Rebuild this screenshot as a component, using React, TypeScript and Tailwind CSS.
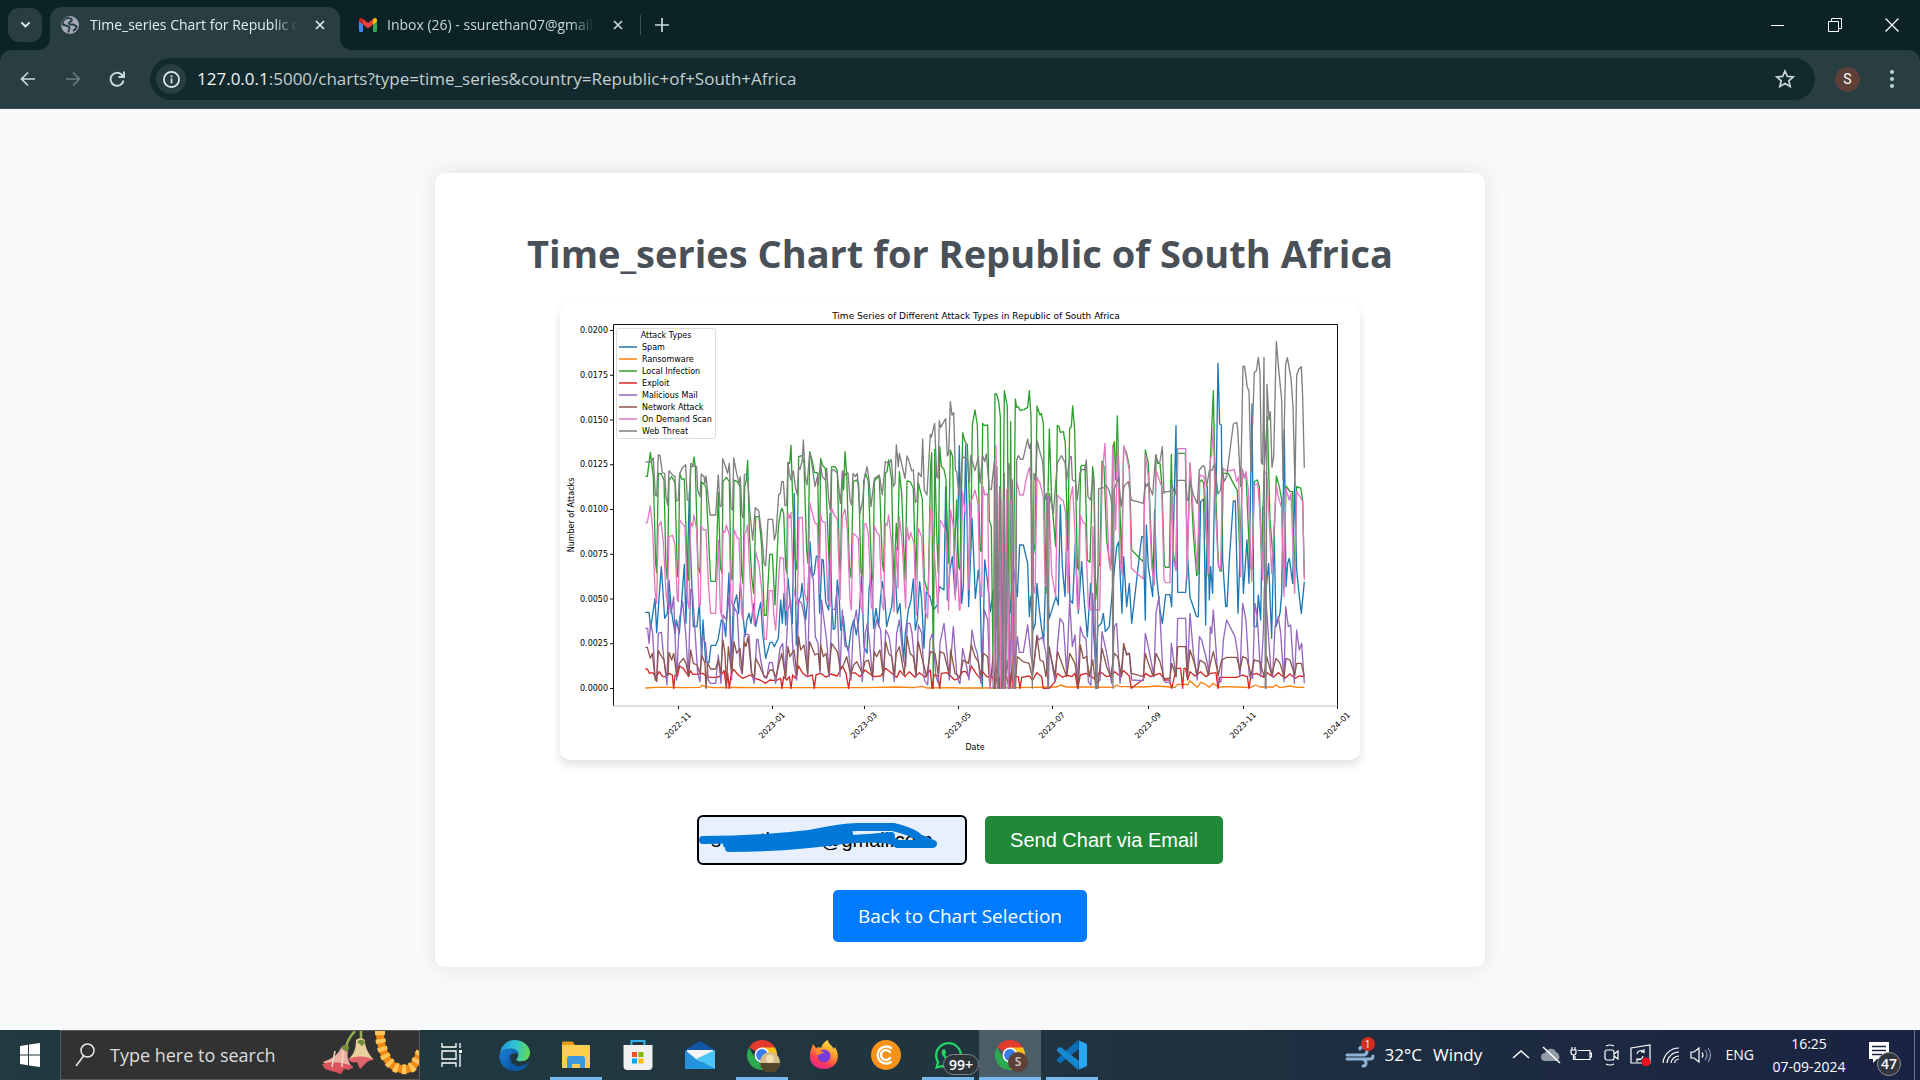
import React from "react";
import { FaWhatsapp } from "react-icons/fa";

const ui = "font-['Open_Sans','Noto_Sans',sans-serif]";

type Series = { name: string; color: string; left: string; right: string };

const series: Series[] = [
  {
    name: "Spam",
    color: "#1f77b4",
    left: "256,937 267,937 272,985 285,895 290,998 296,910 304,800 314,955 322,940 327,840 334,930 345,1000 349,960 358,1000 373,793 378,970 388,575 392,760 400,980 411,980 418,910 425,1080 429,960 437,1085 447,1088 453,1036 467,1036 474,1020 484,960 492,970 497,1010 507,818 513,1090 520,920 530,885 536,940 541,848 548,930 555,1010 561,960 567,940 573,970 581,910 587,980 595,940 602,907 608,1000 617,1075 630,1027 637,1027 643,1040 655,1015 662,900 667,970 672,880 677,975 684,835 690,900 697,970 703,580 709,1035 716,900 722,890 726,850 737,960 743,900 750,725 757,830 763,820 769,768 774,770 779,940 786,778 790,780 797,905 806,930 810,640 815,900 820,988 825,985 832,840 838,900 842,990 850,950 858,1030 865,1055 873,990 881,960 889,1005 896,960 905,830 912,1040 921,1060 927,870 934,820 941,985 948,925 956,980 961,900 967,845 974,890 980,980 986,955 995,920 1005,800 1012,940 1020,910 1031,1080 1036,1000 1045,930 1053,900 1060,837 1066,990 1072,960 1079,845 1085,900 1092,1045 1099,875 1110,890 1120,930 1132,915 1138,860 1152,870 1157,560 1162,900 1170,810 1177,770 1185,885 1190,845 1198,437",
    right: "5,910 10,860 17,435 26,920 36,655 42,790 46,895 55,810 60,860 67,1165 74,780 82,840 91,935 100,870 110,980 120,870 130,970 140,860 150,940 160,800 172,890 179,735 190,735 203,790 208,950 212,890 220,990 226,970 231,850 237,920 244,980 251,1025 258,800 268,955 288,890 295,915 301,615 307,800 315,890 322,640 330,900 338,910 346,730 355,940 365,785 372,895 382,1010 392,850 400,980 407,1100 414,980 424,970 430,940 436,995 448,980 458,860 470,740 476,725 486,940 491,770 500,920 508,850 515,970 545,710 550,710 556,960 559,675 565,800 578,890 584,630 590,830 600,930 607,970 617,884 630,884 635,920 648,377 653,877 677,877 683,770 690,892 710,950 715,950 722,605 731,597 737,975 742,560 748,900 752,800 758,880 764,550 768,590 774,190 779,372 784,375 788,780 797,920 801,920 808,780 820,603 826,603 834,940 845,620 850,880 861,720 867,850 876,312 882,980 890,980 895,885 902,960 908,620 915,900 926,790 935,1015 942,680 948,980 960,940 965,880 973,390 978,860 983,790 988,775 998,850 1004,545 1010,810 1017,880 1024,940 1033,845",
  },
  {
    name: "Ransomware",
    color: "#ff7f0e",
    left: "256,1164 290,1162 330,1162 370,1163 420,1162 427,1156 436,1160 460,1163 520,1162 600,1163 700,1163 800,1163 900,1163 960,1162 1010,1161 1060,1163 1087,1159 1100,1164 1180,1163",
    right: "0,1164 60,1164 160,1163 290,1161 301,1155 320,1161 400,1161 460,1162 470,1155 480,1160 505,1160 550,1161 590,1158 630,1161 645,1162 653,1153 677,1153 683,1155 690,1142 712,1162 722,1147 735,1152 748,1162 760,1150 775,1162 790,1160 830,1161 870,1163 887,1155 900,1161 940,1161 947,1155 960,1163 990,1158 1010,1162 1033,1162",
  },
  {
    name: "Local Infection",
    color: "#2ca02c",
    left: "256,529 262,529 271,457 280,530 287,790 290,818 295,520 304,522 312,540 318,800 322,838 327,540 335,530 345,548 352,830 355,830 359,520 365,537 373,537 382,820 386,840 392,500 398,500 402,471 406,500 414,800 420,820 425,545 438,560 445,700 452,844 467,844 475,577 481,800 486,820 489,545 499,532 508,545 513,830 517,840 522,540 532,545 540,560 545,820 549,850 554,560 559,540 563,481 568,700 575,830 581,880 587,650 597,650 605,740 613,946 619,946 629,763 637,763 645,915 655,680 662,635 666,625 671,640 677,800 680,820 684,488 689,490 693,436 698,600 706,780 711,810 716,470 726,467 732,490 740,750 744,790 749,455 756,480 763,517 773,519 778,810 782,475 787,495 796,505 806,760 811,820 815,500 825,500 832,512 838,780 841,818 847,515 851,570 855,455 860,520 868,800 873,833 880,545 889,540 896,550 903,815 907,830 911,545 917,520 925,545 935,820 939,840 943,545 950,535 958,530 967,790 971,815 976,520 981,515 986,480 995,540 1001,860 1009,670 1013,750 1018,515 1025,580 1035,840 1041,543 1051,545 1060,565 1067,840 1075,548 1087,598 1093,840 1102,872 1105,860 1112,500 1115,458 1120,1165 1124,448 1130,700 1135,820 1139,440 1144,498 1152,508 1158,540 1165,790 1171,450 1178,470 1183,780 1190,600 1196,800",
    right: "0,810 8,398 15,425 22,435 28,600 32,750 37,375 45,330 52,375 60,750 64,755 68,370 74,377 83,375 88,660 94,680 100,1165 105,282 110,282 116,305 121,350 125,1165 133,272 142,320 148,1165 152,365 157,1165 166,297 170,322 175,320 180,331 192,329 203,322 208,272 213,350 218,780 225,730 231,318 240,345 244,340 250,370 258,880 268,387 275,600 287,740 292,376 297,380 301,397 310,395 316,430 323,750 329,385 334,380 338,318 344,390 352,800 356,810 362,500 366,496 375,496 382,780 390,787 398,500 402,540 407,900 416,796 419,796 426,483 432,500 440,720 450,800 455,790 459,440 463,425 467,540 472,348 479,600 485,790 491,440 500,460 508,500 515,750 550,785 556,450 565,490 575,760 583,850 588,465 593,490 600,490 606,560 613,795 617,802 628,802 634,463 640,760 648,810 653,460 676,460 682,780 690,490 700,700 710,827 714,820 719,545 725,540 731,550 745,830 751,480 760,272 765,520 775,790 780,813 784,813 790,520 805,520 820,550 832,572 840,780 847,510 853,530 858,520 870,800 876,810 883,545 892,540 898,560 905,800 912,520 922,350 930,660 940,780 949,528 958,560 965,600 971,870 978,558 990,575 998,575 1003,855 1010,560 1022,564 1028,600 1033,830",
  },
  {
    name: "Exploit",
    color: "#d62728",
    left: "256,1107 262,1107 268,1120 278,1118 288,1132 298,1115 308,1130 318,1130 328,1120 337,1125 341,1165 345,1125 352,1130 359,1098 370,1105 378,1118 386,1128 391,1112 398,1123 415,1122 428,1120 440,1130 452,1132 470,1132 482,1128 492,1112 499,1160 503,1120 508,1165 514,1120 521,1108 535,1125 547,1135 560,1130 570,1125 585,1135 600,1140 617,1150 630,1140 647,1142 662,1135 666,1165 671,1130 680,1140 688,1130 693,1165 698,1125 706,1135 716,1098 728,1120 742,1130 757,1125 763,1165 768,1125 782,1120 798,1132 812,1122 832,1128 847,1098 858,1120 866,1165 872,1120 885,1118 900,1130 915,1110 930,1122 943,1130 962,1128 977,1105 995,1120 1010,1132 1020,1112 1035,1130 1048,1115 1065,1132 1078,1118 1095,1132 1111,1110 1116,1165 1122,1125 1134,1128 1139,1165 1144,1120 1160,1118 1172,1128 1184,1140 1196,1135",
    right: "8,1115 18,1115 26,1130 34,1098 48,1120 60,1135 68,1115 80,1130 98,1130 104,1165 112,1130 122,1165 130,1125 140,1130 147,1165 154,1120 160,1165 167,1130 175,1130 180,1165 185,1132 208,1128 218,1140 231,1118 245,1130 250,1165 268,1165 285,1145 292,1120 308,1132 320,1125 335,1130 345,1120 353,1165 361,1125 378,1120 395,1130 407,1140 415,1120 425,1118 440,1130 456,1126 464,1115 480,1128 491,1112 508,1128 514,1165 550,1138 556,1120 572,1130 585,1125 600,1120 615,1140 628,1140 635,1165 642,1135 650,1105 662,1105 668,1165 672,1105 677,1105 683,1140 690,1115 705,1128 722,1115 738,1130 752,1120 768,1118 774,1165 779,1132 830,1132 846,1125 862,1130 867,1165 873,1125 890,1120 912,1132 922,1118 940,1132 955,1118 975,1135 990,1122 1005,1135 1018,1128 1033,1130",
  },
  {
    name: "Malicious Mail",
    color: "#9467bd",
    left: "256,985 263,985 267,1030 272,970 278,1000 285,1130 290,1145 295,1000 304,997 312,1080 321,1155 327,880 333,940 337,920 341,890 350,1140 358,960 368,905 377,1000 385,1130 392,868 397,868 403,960 413,1120 420,1145 427,1010 437,1030 445,1140 452,1150 467,1150 475,1065 483,1150 489,945 500,960 508,880 515,1140 522,920 532,940 540,1100 546,1120 553,1000 567,1005 575,1120 583,1150 590,1018 594,1018 602,1080 612,1130 620,1135 628,1088 637,1088 647,1150 660,1045 668,1030 675,1130 684,930 692,900 700,1080 710,1140 716,900 725,910 735,960 743,1130 750,800 760,840 766,1010 774,1030 780,1120 785,900 790,945 800,1020 808,1130 816,928 825,928 830,880 840,1130 847,930 855,1040 865,1040 873,1140 880,980 889,930 897,1010 907,1145 916,1000 922,970 930,1040 938,1140 944,990 950,960 962,990 970,1145 977,990 987,1010 993,1050 1003,1145 1010,1000 1018,960 1030,1080 1037,1100 1042,970 1050,970 1056,1000 1068,1130 1075,975 1085,1000 1093,1140 1103,1155 1110,1020 1118,1000 1128,1130 1135,1150 1140,1030 1152,970 1160,1050 1168,1140 1180,980 1190,1120 1198,1150",
    right: "0,1150 8,1045 20,1100 27,1140 36,990 45,1040 52,1060 63,1150 73,930 83,960 90,1140 100,1100 108,700 116,1165 124,760 132,1165 140,680 148,1165 156,900 164,1100 172,1010 178,1057 190,1057 203,975 212,1060 220,1110 231,1005 237,1020 248,1010 258,1060 265,1165 268,1040 285,1145 293,1030 300,955 310,970 320,1120 329,900 337,1040 345,1005 353,1150 361,980 370,1010 378,1015 385,1145 393,1155 398,880 410,1150 420,1140 426,995 440,1060 455,1150 463,980 470,970 480,1150 491,1040 500,1060 508,1060 515,1140 550,1142 556,1000 565,1040 582,1130 588,940 597,890 610,1140 617,1147 630,1147 634,1030 648,1130 653,955 677,955 682,1130 690,940 700,1060 712,1140 718,1010 725,1020 740,1080 747,1120 751,980 755,1000 760,930 775,1150 783,1145 790,1020 800,960 825,1010 833,1060 840,1130 848,910 858,960 868,1130 878,1135 885,910 892,950 902,1130 910,1000 913,860 920,930 932,1100 938,1130 945,980 955,950 962,1000 972,1145 977,920 985,980 992,975 1003,1150 1010,990 1018,1050 1025,1030 1033,1150",
  },
  {
    name: "Network Attack",
    color: "#8c564b",
    left: "256,1042 262,1042 271,1075 277,1060 286,1140 290,1143 295,1052 305,1070 312,1080 318,1120 324,1125 327,1057 335,1080 341,1060 350,1125 358,1090 370,1075 378,1090 386,1130 392,1050 400,1090 411,1095 420,1120 425,1065 435,1090 438,1165 443,1090 452,1107 467,1107 475,1080 482,1120 489,1020 495,1060 499,1165 505,1040 515,1120 522,1025 530,1060 540,1045 547,1120 553,1025 558,1040 564,1010 575,1120 583,1130 587,1075 600,1100 613,1130 620,1130 630,1110 637,1110 648,1130 660,1080 665,1060 677,1135 684,1040 690,1070 702,1050 711,1125 716,1010 722,1050 732,1035 743,1120 749,1025 765,1065 775,1060 780,1110 782,1035 790,1070 798,1060 806,1120 815,1030 832,1055 842,1110 850,1095 860,1070 872,1125 881,1095 890,1085 907,1120 915,1085 925,1080 937,1130 943,1055 950,1070 960,1050 970,1130 977,1025 986,1060 995,1070 1003,1125 1009,1060 1018,1040 1033,1125 1041,1010 1050,1060 1060,1070 1068,1125 1075,1025 1085,1070 1100,1130 1111,1055 1125,1060 1135,1125 1140,1055 1152,1060 1168,1125 1172,1050 1185,1120 1197,1130",
    right: "0,1130 10,1080 25,1090 34,1035 45,1070 55,1085 63,1130 70,1060 83,1070 90,1165 100,1060 105,1165 112,1080 118,1165 126,1060 134,1165 142,1080 150,1165 158,1080 165,1165 172,1070 190,1085 207,1090 217,1130 231,1010 240,1080 250,1085 258,1130 266,1040 285,1125 293,1055 302,1080 320,1130 329,1060 345,1090 355,1165 361,1035 370,1075 380,1070 388,1130 398,1080 408,1165 413,1165 426,1045 440,1100 452,1130 463,1060 473,1070 485,1130 491,1030 500,1065 508,1060 514,1120 550,1130 556,1060 565,1090 580,1130 588,1060 600,1085 612,1135 630,1135 635,1090 648,1130 653,1040 677,1040 682,1130 690,1050 700,1080 712,1125 720,1080 735,1090 745,1125 751,1090 760,1055 775,1125 785,1080 800,1072 830,1072 840,1110 848,1070 860,1075 873,1125 883,1080 900,1085 912,1130 920,1070 935,1125 948,1075 960,1090 972,1130 978,1075 990,1080 1004,1125 1010,1090 1024,1090 1033,1130",
  },
  {
    name: "On Demand Scan",
    color: "#e377c2",
    left: "256,668 262,668 271,617 278,690 285,870 290,910 295,680 303,665 310,725 318,880 322,910 327,710 338,706 345,735 352,900 355,905 359,660 365,668 375,680 382,900 387,925 392,665 398,680 402,645 410,690 417,920 421,915 424,678 430,690 438,690 445,850 452,940 467,940 475,720 481,930 485,950 489,692 494,698 499,675 508,705 513,900 518,920 522,688 532,715 537,715 545,940 549,960 554,700 558,697 563,675 570,830 576,910 583,975 587,755 597,795 605,870 613,1018 619,1018 628,872 637,872 642,950 647,990 655,850 660,772 670,775 677,930 681,930 684,640 689,655 693,637 700,860 707,900 712,915 717,653 727,652 734,880 741,905 745,900 749,607 756,635 765,670 772,672 778,880 781,640 787,665 796,667 803,900 810,920 815,625 823,645 832,657 840,900 847,650 855,627 862,690 870,900 874,930 879,700 888,707 895,715 903,920 908,940 912,672 918,672 925,700 934,920 938,930 943,677 952,700 958,705 966,910 971,930 976,670 981,677 986,645 995,730 1002,935 1009,740 1014,865 1018,650 1026,720 1037,925 1041,680 1047,720 1052,697 1062,730 1069,945 1075,685 1085,710 1095,930 1103,955 1111,630 1116,628 1122,740 1134,940 1140,660 1152,680 1158,700 1166,930 1172,630 1180,680 1186,900 1190,760 1198,930",
    right: "0,930 8,575 15,640 22,645 27,870 32,610 45,570 54,610 60,880 65,890 69,560 75,585 83,580 90,1165 100,1160 108,437 113,1165 118,580 122,1165 130,600 135,1165 140,570 145,1165 150,600 155,610 160,1165 170,545 180,585 190,585 200,530 208,503 213,540 218,850 225,880 231,532 240,550 250,590 255,850 260,860 266,590 275,820 287,890 292,585 300,595 310,603 317,640 324,880 330,600 338,560 345,700 352,920 356,930 361,645 370,668 376,670 385,925 393,930 399,680 405,930 419,930 427,520 435,430 440,600 447,780 452,810 458,437 467,690 473,420 480,780 486,825 491,437 500,470 508,510 514,805 550,837 556,465 565,530 575,800 583,855 588,510 598,540 605,560 612,840 617,848 630,848 635,550 640,780 648,810 653,446 677,446 681,840 690,488 700,640 712,810 719,525 733,530 745,820 751,480 755,465 760,380 765,600 775,800 782,810 788,507 805,513 823,508 830,545 836,530 842,830 847,507 852,535 858,515 865,570 875,845 883,555 893,550 900,640 908,840 914,515 920,520 928,670 935,820 949,555 955,590 965,625 972,890 977,565 988,600 993,580 1004,880 1010,575 1020,590 1028,605 1033,840",
  },
  {
    name: "Web Threat",
    color: "#7f7f7f",
    left: "256,485 271,487 280,474 286,586 290,588 295,465 300,466 307,518 314,520 318,590 323,615 327,512 338,525 345,530 349,603 355,600 359,520 368,503 377,494 382,600 388,600 392,491 398,493 402,498 410,500 413,570 420,590 424,522 432,530 435,550 438,528 443,575 450,645 467,645 475,525 480,620 485,617 488,476 495,495 503,520 508,490 513,625 518,630 521,474 530,520 537,550 541,530 546,645 550,655 553,525 562,520 570,640 578,720 586,623 596,632 605,700 612,790 617,798 624,658 638,658 643,720 648,700 656,585 661,580 665,545 670,545 675,617 680,615 684,488 688,520 693,540 700,512 706,560 712,585 716,500 720,508 727,480 730,420 736,530 741,555 749,460 754,480 765,560 772,530 775,555 781,490 787,530 796,540 800,505 806,600 811,630 814,508 825,512 832,520 841,610 848,512 852,530 858,520 864,518 870,600 875,615 879,520 886,530 892,520 900,640 908,600 914,530 921,500 927,538 933,620 943,535 958,525 967,584 976,485 988,490 994,478 1000,560 1005,550 1009,435 1015,500 1018,460 1035,535 1041,468 1046,480 1055,512 1060,510 1066,608 1071,600 1075,518 1084,530 1088,417 1093,570 1101,585 1111,403 1114,412 1124,370 1130,530 1134,535 1138,362 1142,382 1157,356 1162,468 1166,460 1171,305 1176,345 1181,338 1186,510 1190,515 1197,585",
    right: "0,560 8,470 22,478 28,548 32,466 45,512 55,470 60,550 68,467 74,485 79,462 88,568 94,568 103,485 107,1165 111,500 114,1165 119,560 122,600 128,1165 133,520 137,1165 145,490 149,500 152,600 157,540 163,1165 167,1165 170,480 175,467 182,478 189,478 203,417 208,445 212,430 217,1165 222,520 227,540 232,423 238,450 248,485 255,600 260,580 264,1165 268,580 280,640 292,488 305,467 315,488 320,540 330,470 334,470 337,540 347,545 352,600 360,518 366,508 375,510 379,480 384,590 392,600 398,530 403,560 407,1165 411,1165 416,566 432,563 438,556 446,568 452,590 456,620 459,1165 462,570 470,548 476,530 483,620 492,560 500,550 505,545 514,600 550,610 556,550 560,560 564,550 578,585 587,465 593,488 600,485 607,440 612,580 616,575 630,575 635,550 645,585 653,541 676,541 682,600 686,602 690,545 700,585 712,611 718,510 728,498 734,500 740,560 748,512 757,510 764,490 774,582 782,570 787,500 792,545 800,530 820,372 830,367 833,385 842,560 849,198 854,200 862,262 867,272 873,515 883,217 889,213 895,172 900,217 904,487 908,493 912,172 916,1165 918,1165 921,253 927,360 931,335 936,502 941,470 949,125 957,218 965,300 969,540 977,193 982,173 993,235 999,320 1005,560 1010,226 1016,208 1024,200 1028,290 1033,503",
  },
];

function linePoints(s: Series) {
  const shifted = s.right
    .split(" ")
    .map((p) => {
      const [x, y] = p.split(",").map(Number);
      return `${x + 1200},${y}`;
    })
    .join(" ");
  return `${s.left} ${shifted}`;
}

const yTicks = ["0.0200", "0.0175", "0.0150", "0.0125", "0.0100", "0.0075", "0.0050", "0.0025", "0.0000"];
const xTicks: [number, string][] = [
  [119, "2022-11"],
  [213, "2023-01"],
  [305, "2023-03"],
  [399, "2023-05"],
  [493, "2023-07"],
  [589, "2023-09"],
  [684, "2023-11"],
  [778, "2024-01"],
];

function TimeSeriesChart() {
  return (
    <svg viewBox="0 0 800 457" role="img" aria-label="Time series of attack types" className="mx-auto block w-full max-w-[800px] rounded-[10px] bg-white font-['DejaVu_Sans',sans-serif] text-[8px] shadow-[0_5px_10px_rgba(0,0,0,0.12)]">
      <text x="416" y="16" textAnchor="middle" fontSize="9">Time Series of Different Attack Types in Republic of South Africa</text>
      <g transform="translate(0 -3) scale(0.33333)" fill="none" strokeWidth="4" strokeLinejoin="round">
        {series.map((s) => (
          <polyline key={s.name} points={linePoints(s)} stroke={s.color} />
        ))}
      </g>
      <path d="M53.500 403V21.500H777.500V405" fill="none" stroke="#111" />
      <path d="M53 403H778" stroke="#bbb" />
      {yTicks.map((t, i) => (
        <g key={t}>
          <path d={`M50 ${27.5 + i * 44.75}h3`} stroke="#111" />
          <text x="48" y={30 + i * 44.75} textAnchor="end">{t}</text>
        </g>
      ))}
      {xTicks.map(([x, t]) => (
        <g key={t}>
          <path d={`M${x - 0.5} 403v3`} stroke="#111" />
          <text transform={`translate(${x - 11} 436) rotate(-45)`}>{t}</text>
        </g>
      ))}
      <text x="415" y="447" textAnchor="middle">Date</text>
      <text transform="translate(14 212) rotate(-90)" textAnchor="middle">Number of Attacks</text>
      <rect x="56.500" y="25.500" width="99" height="110" rx="2" fill="#fff" stroke="#ddd" />
      <text x="106" y="35" textAnchor="middle">Attack Types</text>
      {series.map((s, i) => (
        <g key={s.name}>
          <path d={`M59 ${44 + i * 12}h18`} stroke={s.color} strokeWidth="1.3" />
          <text x="82" y={47 + i * 12}>{s.name}</text>
        </g>
      ))}
    </svg>
  );
}

function CloseIcon() {
  return (
    <svg viewBox="0 0 10 10" className="size-[10px]" fill="none" stroke="currentColor" strokeWidth="1.7">
      <path d="M1 1l8 8M9 1L1 9" />
    </svg>
  );
}

function BrowserChrome() {
  return (
    <header className={`bg-[#0b2327] text-[#c9d8d9] ${ui}`}>
      <div className="flex h-[50px] items-stretch">
        <button aria-label="Search tabs" className="my-2 ml-2 grid w-[34px] place-items-center rounded-[11px] bg-[#283e43]">
          <svg viewBox="0 0 12 8" className="w-[11px]" fill="none" stroke="#e8f0f0" strokeWidth="2"><path d="M1.500 1.500L6 6l4.500-4.500" /></svg>
        </button>
        <div className="relative ml-2 mt-[7px] flex w-[290px] items-center rounded-t-xl bg-[#283e43] pb-[7px] pl-[11px] pr-[15px] text-sm text-[#e3eeee]">
          <svg viewBox="0 0 12 12" className="absolute -left-3 bottom-0 size-3"><path d="M12 0v12H0C7 12 12 7 12 0" fill="#283e43" /></svg>
          <svg viewBox="0 0 12 12" className="absolute -right-3 bottom-0 size-3"><path d="M0 0v12h12C5 12 0 7 0 0" fill="#283e43" /></svg>
          <svg viewBox="0 0 18 18" className="size-[18px] shrink-0">
            <circle cx="9" cy="9" r="9" fill="#a3a8b4" />
            <path d="M8 1.500C4 2 1.500 5 1.500 8.500l4 1.200c2 .3 3 1 3 2.300 0 1-1 1.500-1 4.500M8 1.500c.5 1.500 2.500 1 3 2.500.3 1.200-2.500 1.500-3 3-.4 1.500 2 1.500 3.500 1.500 2 0 2.500 1.500 4.500 1.500M12 15c2-1 3.500-3 4-5" fill="none" stroke="#283e43" strokeWidth="1.900" />
          </svg>
          <span className="ml-[11px] w-[208px] shrink-0 overflow-hidden whitespace-nowrap [mask-image:linear-gradient(to_right,black_88%,transparent)]">Time_series Chart for Republic of South Africa</span>
          <button aria-label="Close tab" className="ml-auto"><CloseIcon /></button>
        </div>
        <div className="flex w-[300px] items-center pl-[19px] text-sm">
          <svg viewBox="0 0 18 14" className="w-[18px] shrink-0">
            <path d="M0 2v10.500c0 .8.600 1.500 1.500 1.500H4V4z" fill="#4285f4" />
            <path d="M18 2v10.500c0 .8-.6 1.500-1.500 1.500H14V4z" fill="#34a853" />
            <path d="M14 1l-5 4L4 1v5.500l5 4 5-4z" fill="#ea4335" />
            <path d="M4 6.500L0 3.500V2c0-1.700 2-2.500 3.300-1.500L4 1z" fill="#c5221f" />
            <path d="M14 6.500l4-3V2c0-1.700-2-2.500-3.300-1.500L14 1z" fill="#fbbc04" />
          </svg>
          <span className="ml-[10px] w-[208px] shrink-0 overflow-hidden whitespace-nowrap [mask-image:linear-gradient(to_right,black_88%,transparent)]">Inbox (26) - ssurethan07@gmail.com</span>
          <button aria-label="Close tab" className="ml-auto mr-[17px]"><CloseIcon /></button>
        </div>
        <div className="my-auto h-5 w-px bg-[#3a5157]" />
        <button aria-label="New tab" className="ml-[14px]">
          <svg viewBox="0 0 14 14" className="size-[14px]" stroke="#c9dcde" strokeWidth="1.700"><path d="M7 0v14M0 7h14" /></svg>
        </button>
        <div className="ml-auto flex">
          <button aria-label="Minimize" className="w-[57px]"><svg viewBox="0 0 14 14" className="mx-auto size-[14px]" stroke="#fff"><path d="M0 7.500h13" /></svg></button>
          <button aria-label="Restore" className="w-[57px]"><svg viewBox="0 0 14 14" className="mx-auto size-[14px]" fill="none" stroke="#fff"><path d="M.5 3.500h10v10h-10zM3.500 3V.5h10v10H11" /></svg></button>
          <button aria-label="Close window" className="w-[57px]"><svg viewBox="0 0 14 14" className="mx-auto size-[14px]" stroke="#fff" strokeWidth="1.300"><path d="M.5.5l13 13M13.500.5l-13 13" /></svg></button>
        </div>
      </div>
      <div className="flex h-[59px] items-center rounded-t-xl border-b border-[#3a4f54] bg-[#283e43]">
        <button aria-label="Back" className="ml-5"><svg viewBox="0 0 16 16" className="size-4" fill="none" stroke="#c8dcde" strokeWidth="1.700"><path d="M15 8H1.500M8 1.500L1.500 8 8 14.500" /></svg></button>
        <button aria-label="Forward" className="ml-[29px]"><svg viewBox="0 0 16 16" className="size-4" fill="none" stroke="#6b7e82" strokeWidth="1.700"><path d="M1 8h13.500M8 1.500L14.500 8 8 14.500" /></svg></button>
        <button aria-label="Reload" className="ml-[28px]"><svg viewBox="0 0 16 16" className="size-4" fill="none" stroke="#c8dcde" strokeWidth="1.900"><path d="M14.500 9.500A6.500 6.500 0 1 1 12.500 3.500L14.500 5.500M15 0.500V6H9.500" /></svg></button>
        <div className="ml-[25px] flex h-[42px] flex-1 items-center rounded-full bg-[#12292d] pl-[6px] pr-5">
          <span className="grid size-[30px] place-items-center rounded-full bg-[#283e43]">
            <svg viewBox="0 0 18 18" className="size-[17px]" fill="none" stroke="#e3eeee" strokeWidth="1.800"><circle cx="9" cy="9" r="8" /><path d="M9 8v5M9 4.800v1.800" /></svg>
          </span>
          <p className="ml-[11px] text-[17px] text-[#c3cfd1]"><span className="text-[#eef5f5]">127.0.0.1</span>:5000/charts?type=time_series&amp;country=Republic+of+South+Africa</p>
          <button aria-label="Bookmark this page" className="ml-auto"><svg viewBox="0 0 20 20" className="size-5" fill="none" stroke="#c8d4d6" strokeWidth="1.700"><path d="M10 2l2.400 5.400 5.900.5-4.500 3.900 1.400 5.800L10 14.500l-5.200 3.100 1.400-5.800L1.700 7.900l5.900-.5z" /></svg></button>
        </div>
        <button aria-label="Profile" className="ml-5 grid size-[25px] place-items-center rounded-full bg-[#5d4038] font-['Roboto',sans-serif] text-sm text-white">S</button>
        <button aria-label="Menu" className="ml-[30px] mr-[26px]"><svg viewBox="0 0 4 18" className="h-[18px] w-1" fill="#bcd4d8"><circle cx="2" cy="2" r="2" /><circle cx="2" cy="9" r="2" /><circle cx="2" cy="16" r="2" /></svg></button>
      </div>
    </header>
  );
}

function ChromeLogo() {
  return (
    <svg viewBox="0 0 32 32" className="size-[30px]">
      <path d="M16 16L2.140 8A16 16 0 0 1 29.860 8z" fill="#e33b2e" />
      <path d="M16 32A16 16 0 0 1 2.140 8L9 20l7 4 7-4z" fill="#2da94f" />
      <path d="M16 8h13.860A16 16 0 0 1 16 32l7-12z" fill="#fbc116" />
      <circle cx="16" cy="16" r="8" fill="#fff" />
      <circle cx="16" cy="16" r="6.300" fill="#3b7ded" />
    </svg>
  );
}

function TaskButton({ label, open, active, children }: { label: string; open?: boolean; active?: boolean; children: React.ReactNode }) {
  return (
    <button aria-label={label} className={active ? "relative grid w-[62px] place-items-center bg-[#4b5d67]" : "relative grid w-[62px] place-items-center"}>
      {children}
      {(open || active) && <span className={active ? "absolute inset-x-0 bottom-0 h-[3px] bg-[#76b9ed]" : "absolute inset-x-[5px] bottom-0 h-[3px] bg-[#76b9ed]"} />}
    </button>
  );
}

function SearchArt() {
  return (
    <svg viewBox="0 0 100 48" className="ml-auto h-12 w-[100px] shrink-0">
      <path d="M36 0Q28 8 26 20M42 0v12" fill="none" stroke="#8fae52" strokeWidth="2.500" />
      <path d="M22 17c4-5 9-3 7 2-1 6-1 11 5 18-6 1-11 1-16 0-6-1-10-3-14-6 8-3 14-6 18-14" fill="#ecb0a2" />
      <path d="M3 33c9-3 20-2 31 2l-4 4-5-1-3 5-6-2-4-1-6-2z" fill="#d9545c" />
      <path d="M16 20l-3 16M24 20l-1 16" stroke="#f6d6c2" strokeWidth="1.500" />
      <path d="M37 9c3-3 9-2 9 1 0 6 3 12 8 18-3 1-9 3-13 3-4 0-8-1-11-3 5-5 7-11 7-19" fill="#e8cf9b" />
      <path d="M29 28c7-3 18-4 26 1-4 0-6 1-8 3l-6 6-3-7c-4 1-7 0-9-3" fill="#e2646b" />
      <path d="M22 17c2-4 8-4 8 0l-2 4zM38 11c2-3 8-3 8 1l-3 3z" fill="#728b35" />
      <path d="M61 0C61 18 68 36 82 38S97 30 102 21" fill="none" stroke="#f08a12" strokeWidth="8" />
      <path d="M61 0C61 18 68 36 82 38S97 30 102 21" fill="none" stroke="#ffc55a" strokeWidth="10" strokeDasharray="4 4" />
    </svg>
  );
}

function Taskbar() {
  return (
    <footer className={`flex h-[50px] items-stretch bg-linear-to-r from-[#213940] via-[#21353f] to-[#1a2342] text-white ${ui}`}>
      <button aria-label="Start" className="grid w-[60px] shrink-0 place-items-center">
        <svg viewBox="0 0 20 24" className="h-6 w-5" fill="#fff"><path d="M0 3l8-1.200V11.500H0zM9 1.600L20 0v11.500H9zM0 12.500h8v9.700L0 21zM9 12.500h11V24L9 22.400z" /></svg>
      </button>
      <label className="flex w-[360px] shrink-0 items-center overflow-hidden border border-[#5a5a5a] bg-[#323232] pl-[14px]">
        <svg viewBox="0 0 20 24" className="h-6 w-5 shrink-0" fill="none" stroke="#e8e8e8" strokeWidth="1.500"><circle cx="12.500" cy="7.500" r="6.500" /><path d="M8.500 13L1 23" /></svg>
        <input aria-label="Search" placeholder="Type here to search" className="ml-[15px] w-[190px] bg-transparent text-[18px] outline-none placeholder:text-[#dcdcdc]" />
        <SearchArt />
      </label>
      <nav className="ml-px flex">
        <TaskButton label="Task view">
          <svg viewBox="0 0 22 24" className="h-6 w-[22px]" fill="none" stroke="#fff" strokeWidth="1.300"><path d="M1 0v4h14V0M1 24v-4h14v4M1 8h14v8H1zM19 0v5M19 11v13" /><path d="M18 7h3v3h-3z" fill="#fff" stroke="none" /></svg>
        </TaskButton>
        <TaskButton label="Edge">
          <svg viewBox="0 0 32 32" className="size-[31px]">
            <defs>
              <linearGradient id="edgeTop" x1="0" x2="1" y1=".4" y2=".5"><stop stopColor="#1e96d8" /><stop offset=".5" stopColor="#31c4d4" /><stop offset="1" stopColor="#62d84e" /></linearGradient>
              <linearGradient id="edgeLow" x2="1" y2="1"><stop stopColor="#1683d8" /><stop offset="1" stopColor="#0c4a94" /></linearGradient>
            </defs>
            <path d="M1 14C2 6 8 0 16 0c9 0 16 6 16 13 0 6-4 9-9 9-4 0-5-1-5-2s2-2 2-5c0-4-4-6-8-6C7 9 2 11 1 14" fill="url(#edgeTop)" />
            <path d="M.5 16C1 11 6 9 12 9c4 0 8 2 8 6-2-2-7-2-9 2-2 5 1 11 6 14.900C8 32.500 0 26 .5 16" fill="url(#edgeLow)" />
            <path d="M12 15c-2 7 3 12 9 12 4 0 7-2 8.500-3 .7-.4 1 .2.700.8C27 30 22 32 17 32 11 29 8 20 12 15" fill="#0c59a4" />
          </svg>
        </TaskButton>
        <TaskButton label="File Explorer" open>
          <svg viewBox="0 0 28 28" className="size-7"><path d="M0 2c0-1 .5-1.500 1.500-1.500h9L13 4v6H0z" fill="#e69b12" /><path d="M1 4h26q1 0 1 1v21q0 1-1 1H1q-1 0-1-1V5q0-1 1-1" fill="#fccf52" /><path d="M5 27v-9q0-3 3-3h12q3 0 3 3v9h-5v-4h-8v4z" fill="#3a98dc" /></svg>
        </TaskButton>
        <TaskButton label="Microsoft Store">
          <svg viewBox="0 0 30 30" className="size-[30px]"><path d="M8.500 6V1h13v5" fill="none" stroke="#2fb3ea" strokeWidth="2" /><path d="M.5 5h29v21q0 4-4 4h-21q-4 0-4-4z" fill="#f0f0f0" /><path d="M9 12h5v5H9z" fill="#f25022" /><path d="M15.500 12h5v5h-5z" fill="#7fba00" /><path d="M9 18.500h5v5H9z" fill="#00a4ef" /><path d="M15.500 18.500h5v5h-5z" fill="#ffb900" /></svg>
        </TaskButton>
        <TaskButton label="Mail">
          <svg viewBox="0 0 30 28" className="h-7 w-[30px]"><path d="M0 9L15 0l15 9v4H0z" fill="#1155a5" /><path d="M2 9h26v12H2z" fill="#f4f4f4" /><path d="M0 9v19h30L11 18z" fill="#2590dc" /><path d="M30 9v19L11 18z" fill="#4cc5f4" /><path d="M0 28l15-7 15 7z" fill="#2196e0" /></svg>
        </TaskButton>
        <TaskButton label="Chrome" open>
          <span className="relative"><ChromeLogo /><svg viewBox="0 0 20 20" className="absolute -bottom-[2px] -right-[3px] size-5"><circle cx="10" cy="10" r="10" fill="#d5bd8c" /><path d="M0 11h20a10 10 0 0 1-20 0" fill="#51482c" /><circle cx="10" cy="7" r="4" fill="#f1dfb4" /></svg></span>
        </TaskButton>
        <TaskButton label="Firefox">
          <svg viewBox="0 0 30 30" className="size-[30px]">
            <defs><linearGradient id="fox" x1=".8" y1="0" x2=".3" y2="1"><stop stopColor="#fff04a" /><stop offset=".4" stopColor="#ff9a2b" /><stop offset=".75" stopColor="#ff3b55" /><stop offset="1" stopColor="#e0258c" /></linearGradient></defs>
            <path d="M4 4l3 4c2-1 4-1 5 0 1-4 4-7 7-8 0 4 4 5 6 9l1-2c3 5 4 11 1 16-3 4-7 6-12 6C6 29 0 23 1 15c0-4 2-8 3-11" fill="url(#fox)" />
            <circle cx="15" cy="16" r="6.500" fill="#7b3bd6" /><path d="M7 10c4 0 6 1 8 3-3 0-4 2-7 2-1-2-1-3-1-5" fill="#ff8b26" />
          </svg>
        </TaskButton>
        <TaskButton label="Coin app">
          <svg viewBox="0 0 30 30" className="size-[30px]" fill="none" stroke="#fff" strokeWidth="2.300" strokeLinecap="round"><circle cx="15" cy="15" r="15" fill="#f7931a" stroke="none" /><path d="M20 8a8.500 8.500 0 1 0 0 14M19 12a5 5 0 1 0 0 6" /></svg>
        </TaskButton>
        <TaskButton label="WhatsApp" open>
          <FaWhatsapp className="size-[31px] text-[#25d366]" />
          <span className="absolute bottom-[5px] left-[26px] z-10 flex h-[21px] w-9 items-center justify-center rounded-full border border-[#7d858a] bg-[#2d3439] text-sm font-semibold">99+</span>
        </TaskButton>
        <TaskButton label="Chrome, profile S" active>
          <span className="relative"><ChromeLogo /><span className="absolute -bottom-[2px] -right-[3px] grid size-5 place-items-center rounded-full bg-[#5d4038] text-xs font-semibold text-[#d5c9c5]">S</span></span>
        </TaskButton>
        <TaskButton label="Visual Studio Code" open>
          <svg viewBox="0 0 30 30" className="size-[30px]"><path d="M21 0L0 19v2l3 2 1-.2L22 9z" fill="#0b6fb8" /><path d="M21 30L0 11V9l3-2 1 .2L22 21z" fill="#1787cf" /><path d="M21 0l8 3.500q1 .5 1 1.500v20q0 1-1 1.500L21 30q1-.5 1-2V2q0-1.500-1-2" fill="#2aa7f2" /></svg>
        </TaskButton>
      </nav>
      <div className="ml-auto flex shrink-0 items-center">
        <span className="relative">
          <svg viewBox="0 0 30 28" className="h-7 w-[30px]" fill="none" stroke="#8fb4d8" strokeWidth="3" strokeLinecap="round"><path d="M2 14h16q4 0 4-4t-4-4-3 2M2 18h23q3 0 3-3M9 18h9q3 1 3 4t-3 3" /></svg>
          <span className="absolute -top-[4px] right-0 grid size-[14px] place-items-center rounded-full bg-[#d13020] text-[10px]">1</span>
        </span>
        <p className="ml-[10px] flex w-[121px] gap-[11px] whitespace-nowrap text-[17px]"><span>32°C</span><span>Windy</span></p>
        <div className="flex [&>svg]:mx-[4px] [&>svg]:size-[22px]">
          <svg viewBox="0 0 22 22" fill="none" stroke="#fff" strokeWidth="1.500"><path d="M3 14l8-7 8 7" /></svg>
          <svg viewBox="0 0 22 22"><path d="M5 17a4 4 0 0 1 0-8 6 6 0 0 1 11-1 5 5 0 0 1 1 9z" fill="#929ba6" /><path d="M3 3l17 16" stroke="#fff" strokeWidth="1.500" /></svg>
          <svg viewBox="0 0 22 22" fill="none" stroke="#fff" strokeWidth="1.200"><path d="M8 6.500h12v9H5V12M20 9h1.500v4H20M1 6h5v2.500Q6 11 3.500 11T1 8.500zM2 6V3M5 6V3M3.500 11v5" /></svg>
          <svg viewBox="0 0 22 22" fill="none" stroke="#fff" strokeWidth="1.200"><rect x="5" y="6" width="9" height="10" rx="2" /><path d="M14 10l4-3v8l-4-3M6 2q4-2 8 0M6 20q4 2 8 0" /></svg>
          <svg viewBox="0 0 22 22" fill="none" stroke="#fff" strokeWidth="1.200"><path d="M1 4l19-3v18H1zM7 10a4 4 0 0 1 7-2V5M14 8h-3M13 12a4 4 0 0 1-6 3v3M7 15h3" /><circle cx="16" cy="18" r="4.500" fill="#e81123" stroke="none" /></svg>
          <svg viewBox="0 0 22 22" fill="none" stroke="#fff" strokeWidth="1.200"><path d="M3 19A16 16 0 0 1 19 4" /><path d="M7 19A12 12 0 0 1 19 8M11 19a8 8 0 0 1 8-7M14.500 19a5 5 0 0 1 4.500-4" /></svg>
          <svg viewBox="0 0 22 22" fill="none" stroke="#fff" strokeWidth="1.200"><path d="M1 8h3l5-4v14l-5-4H1zM12 8.500q2 2.500 0 5" /><path d="M15 6q4 5 0 10M18 4q5 7 0 14" stroke="#8e98a8" /></svg>
        </div>
        <span className="ml-[10px] text-sm">ENG</span>
        <div className="ml-[15px] w-[80px] text-center text-sm leading-[23px]"><p>16:25</p><p className="whitespace-nowrap">07-09-2024</p></div>
        <button aria-label="Notifications" className="relative ml-[20px] mr-[15px]">
          <svg viewBox="0 0 30 30" className="size-[30px]"><path d="M0 2h20v17H8l-4 4v-4H0z" fill="#fff" /><path d="M3 6.500h14M3 10.500h14M3 14.500h10" stroke="#1b2544" strokeWidth="1.500" /></svg>
          <span className="absolute -bottom-[6px] -right-[2px] grid size-6 place-items-center rounded-full border border-[#8b8f96] bg-[#32363d] text-sm font-semibold">47</span>
        </button>
        <div className="mr-[5px] h-[50px] w-px bg-[#6d7388]" />
      </div>
    </footer>
  );
}

export default function App() {
  return (
    <div className="flex min-h-screen flex-col bg-[#f8f9fb]">
      <BrowserChrome />
      <main className="flex-1 px-6 pb-[63px] pt-16">
        <section className={`mx-auto max-w-[1050px] rounded-[10px] bg-white px-6 pb-[25px] pt-[52px] text-center shadow-[0_0_20px_rgba(0,0,0,0.1)] ${ui}`}>
          <h1 className="mb-[22px] text-[38px] font-bold leading-14 text-[#495057]">Time_series Chart for Republic of South Africa</h1>
          <TimeSeriesChart />
          <form className="mt-[55px] flex items-center justify-center gap-[18px]" onSubmit={(e) => e.preventDefault()}>
            <div className="relative">
              <input type="text" aria-label="Recipient email" defaultValue={"s\u00a0\u00a0\u00a0\u00a0\u00a0\u00a0\u00a0than\u00a0\u00a0\u00a0\u00a0@gmail.com"} className="block h-[50px] w-[270px] rounded-md border-2 border-black bg-[#e8f0fe] px-[12px] font-['Liberation_Sans',sans-serif] text-[20px] outline-none" />
              <svg viewBox="0 0 240 30" className="pointer-events-none absolute left-[2px] top-[8px] h-[30px] w-[240px]" fill="none" stroke="#0078d7" strokeWidth="8" strokeLinecap="round" strokeLinejoin="round">
                <path d="M4 17Q60 17 110 11Q145 4 158 4H194Q215 9 220 15L234 21H198Q192 14 150 16Q90 25 30 25" />
                <path d="M28 21Q80 23 192 13M40 19Q90 16 150 11" />
              </svg>
            </div>
            <button type="submit" className="h-[48px] rounded-[5px] bg-[#218838] px-[25px] font-['Liberation_Sans',sans-serif] text-[20px] text-white">Send Chart via Email</button>
          </form>
          <a href="#charts" className="mx-auto mt-[25px] block w-fit rounded-[5px] bg-[#007bff] px-[25px] py-3 text-[19px] leading-7 text-white">Back to Chart Selection</a>
        </section>
      </main>
      <Taskbar />
    </div>
  );
}
